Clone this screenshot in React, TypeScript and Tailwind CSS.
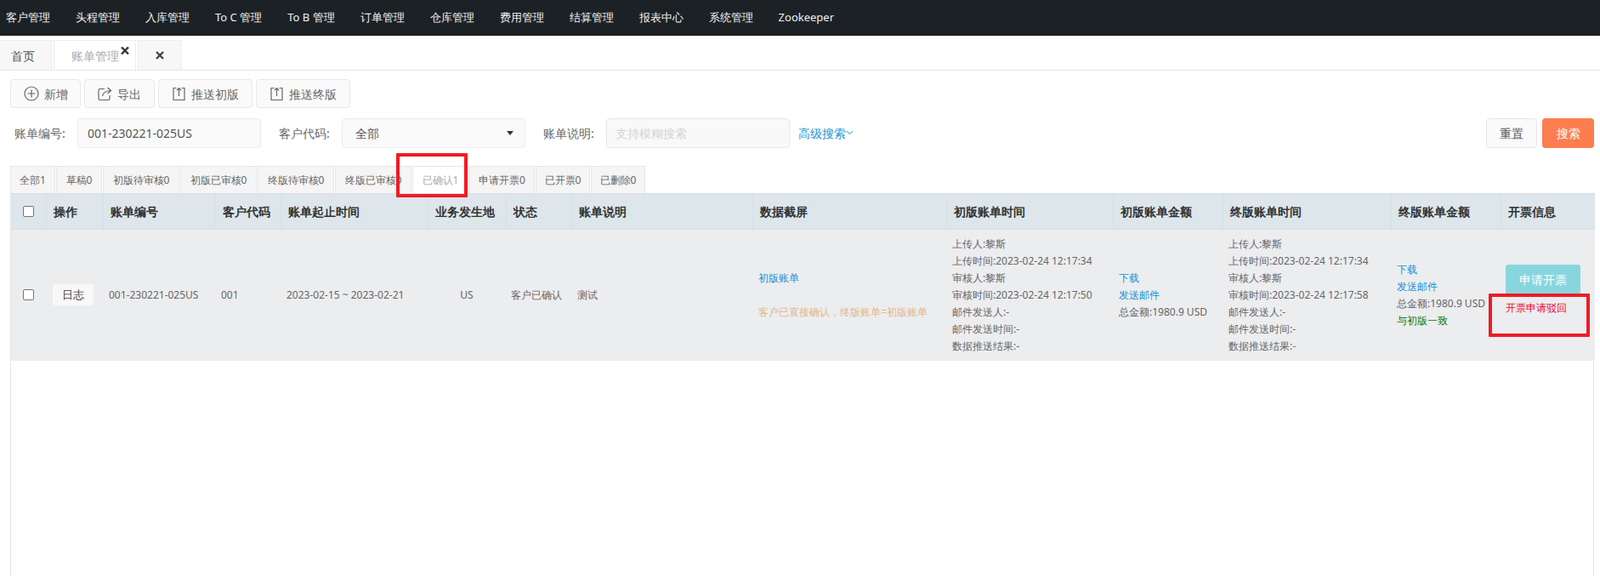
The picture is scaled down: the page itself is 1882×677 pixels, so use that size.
const NAV = ["客户管理","头程管理","入库管理","To C 管理","To B 管理","订单管理","仓库管理","费用管理","结算管理","报表中心","系统管理","Zookeeper"];
const FILTERS: [string, string][] = [["全部1","w-[53px]"],["草稿0","w-[54px]"],["初版待审核0","w-[90px]"],["初版已审核0","w-[90px]"],["终版待审核0","w-[90px]"],["终版已审核0","w-[90px]"],["已确认1","w-[66px]"],["申请开票0","w-[77px]"],["已开票0","w-[64px]"],["已删除0","w-[64px]"]];
const COLS: [string, string][] = [["","w-[41px]"],["操作","w-[67px]"],["账单编号","w-[132px]"],["客户代码","w-[77px]"],["账单起止时间","w-[173px]"],["业务发生地","w-[92px]"],["状态","w-[77px]"],["账单说明","w-[213px]"],["数据截屏","w-[228px]"],["初版账单时间","w-[196px]"],["初版账单金额","w-[129px]"],["终版账单时间","w-[198px]"],["终版账单金额","w-[129px]"],["开票信息","w-[111px]"]];

function PlusIcon() {
  return <svg width="18" height="18" viewBox="0 0 18 18" fill="none" stroke="#666" strokeWidth="1.2"><circle cx="9" cy="9" r="8"/><path d="M9 4.5v9M4.5 9h9"/></svg>;
}
function ShareIcon() {
  return <svg width="17" height="17" viewBox="0 0 17 17" fill="none" stroke="#666" strokeWidth="1.2"><path d="M8 2.5H2.5a1.5 1.5 0 0 0-1.5 1.5v10a1.5 1.5 0 0 0 1.5 1.5h10a1.5 1.5 0 0 0 1.5-1.5V10"/><path d="M5.5 11c.5-4 3-6 9.5-6.5M11.5 1l4 3.5-4 3.5"/></svg>;
}
function UploadIcon() {
  return <svg width="17" height="17" viewBox="0 0 17 17" fill="none" stroke="#666" strokeWidth="1.2"><path d="M5.5 1.5H2v14h13v-14h-3.5"/><path d="M8.5 11V1.5M6 4l2.5-2.5L11 4"/></svg>;
}
function ToolButton({ icon, label, className }: { icon: React.ReactNode; label: string; className: string }) {
  return <button className={`flex h-[34px] items-center justify-center gap-[6px] rounded-[4px] border border-[#e6e6ef] bg-[#fafafa] text-[14px] text-[#666] ${className}`}>{icon}{label}</button>;
}
function Lines({ items, className = "" }: { items: string[]; className?: string }) {
  return <div className={className}>{items.map((t) => <div key={t}>{t}</div>)}</div>;
}

export default function App() {
  return (
    <div className="relative h-[677px] overflow-hidden bg-white text-[#666] font-['Noto_Sans_CJK_SC','Microsoft_YaHei',sans-serif]">
      <nav className="flex h-[42px] items-center gap-[30px] bg-[#1c2126] pl-[7px] text-[13px] text-[#f0f0f0]">
        {NAV.map((n) => <span key={n}>{n}</span>)}
      </nav>
      <div className="flex h-[41px] items-end gap-[2px] border-b border-[#e6e6ef]">
        <div className="flex h-[35px] w-[61px] items-center border border-b-0 border-l-0 border-[#ececf2] bg-[#f7f7f7] pl-[13px] text-[14px] text-[#555]">首页</div>
        <div className="relative flex h-[35px] w-[97px] items-center border border-b-0 border-[#ececf2] bg-white pl-[20px] text-[14px] text-[#aaa]">
          账单管理
          <svg className="absolute right-[7px] top-[7px]" width="10" height="9" viewBox="0 0 10 9" stroke="#333" strokeWidth="2.4"><path d="M1 0.5l8 8M9 0.5l-8 8"/></svg>
        </div>
        <div className="flex h-[35px] w-[52px] items-center justify-center border border-b-0 border-[#ececf2] bg-[#f7f7f7]">
          <svg width="10" height="10" viewBox="0 0 10 10" stroke="#444" strokeWidth="2.4"><path d="M1 1l8 8M9 1l-8 8"/></svg>
        </div>
      </div>

      <div className="mt-[10px] flex gap-[4px] pl-[12px]">
        <ToolButton icon={<PlusIcon />} label="新增" className="w-[83px]" />
        <ToolButton icon={<ShareIcon />} label="导出" className="w-[83px]" />
        <ToolButton icon={<UploadIcon />} label="推送初版" className="w-[111px]" />
        <ToolButton icon={<UploadIcon />} label="推送终版" className="w-[111px]" />
      </div>

      <div className="mt-[11px] flex h-[36px] items-center pl-[17px] pr-[7px] text-[14px]">
        <span className="w-[74px]">账单编号:</span>
        <div className="flex h-[35px] w-[216px] items-center rounded-[4px] border border-[#ececf2] bg-[#fafafa] pl-[11px] text-[#555]">001-230221-025US</div>
        <span className="ml-[21px] w-[74px]">客户代码:</span>
        <div className="flex h-[35px] w-[216px] items-center justify-between rounded-[4px] border border-[#ececf2] bg-[#fafafa] pl-[15px] pr-[13px] text-[#555]">
          全部
          <svg width="8" height="5" viewBox="0 0 8 5" fill="#333"><path d="M0 0h8L4 5z"/></svg>
        </div>
        <span className="ml-[21px] w-[74px]">账单说明:</span>
        <div className="flex h-[35px] w-[216px] items-center rounded-[4px] border border-[#e6e6ef] bg-[#f9f9f9] pl-[10px] text-[#d4d4d4]">支持模糊搜索</div>
        <span className="ml-[10px] flex items-center text-[#1a97d0]">
          高级搜索
          <svg width="9" height="6" viewBox="0 0 9 6" fill="none" stroke="#1a97d0" strokeWidth="1"><path d="M1 1l3.5 3.5L8 1"/></svg>
        </span>
        <div className="ml-auto flex gap-[6px]">
          <button className="h-[35px] w-[60px] rounded-[4px] border border-[#e6e6ef] bg-[#fafafa] text-[#555]">重置</button>
          <button className="h-[35px] w-[61px] rounded-[4px] bg-[#fc7d50] text-white">搜索</button>
        </div>
      </div>

      <div className="mt-[21px] flex gap-px pl-[12px]">
        {FILTERS.map(([f, w]) => (
          <div key={f} className={`flex h-[32px] items-center justify-center border border-b-0 border-[#e6e6ea] text-[12px] ${w} ${f === "已确认1" ? "bg-white text-[#aaa]" : "bg-[#f5f5f5] text-[#666]"}`}>{f}</div>
        ))}
      </div>

      <div className="mx-[12px] mr-[7px] h-[450px] border-x border-[#e4e4e8]">
        <table className="w-full table-fixed border-collapse text-[12px]">
          <colgroup>{COLS.map(([h, w]) => <col key={h + w} className={w} />)}</colgroup>
          <thead>
            <tr className="h-[42px] border-y border-[#dcdce2] bg-[#dce6eb]">
              {COLS.map(([h], i) => (
                <th key={h + i} className="border-r border-[#d8e0e4] px-[8px] text-left text-[14px] font-bold text-[#333] last:border-r-0">
                  {i === 0 ? <span className="ml-[6px] block size-[13px] rounded-[2px] border border-[#767676] bg-white" /> : h}
                </th>
              ))}
            </tr>
          </thead>
          <tbody>
            <tr className="h-[154px] bg-[#ecedef] align-middle leading-[20px]">
              <td className="px-[8px]"><span className="ml-[6px] block size-[13px] rounded-[2px] border border-[#767676] bg-white" /></td>
              <td className="px-[8px]"><span className="block h-[25px] w-[48px] rounded-[3px] bg-[#f8f8f8] text-center text-[13px] leading-[25px] text-[#444]">日志</span></td>
              <td className="pl-[7px]">001-230221-025US</td>
              <td className="pl-[7px]">001</td>
              <td className="pl-[7px]">2023-02-15 ~ 2023-02-21</td>
              <td className="text-center">US</td>
              <td className="pl-[6px]">客户已确认</td>
              <td className="pl-[7px]">测试</td>
              <td className="pl-[7px]">
                <div className="text-[#1a8fdc]">初版账单</div>
                <div className="h-[20px]" />
                <div className="whitespace-nowrap text-[#e3b587]">客户已直接确认，终版账单=初版账单</div>
              </td>
              <td className="pl-[7px]"><Lines className="whitespace-nowrap" items={["上传人:黎斯","上传时间:2023-02-24 12:17:34","审核人:黎斯","审核时间:2023-02-24 12:17:50","邮件发送人:-","邮件发送时间:-","数据推送结果:-"]} /></td>
              <td className="pl-[7px]">
                <div className="text-[#1a8fdc]">下载</div>
                <div className="text-[#1a8fdc]">发送邮件</div>
                <div className="whitespace-nowrap">总金额:1980.9 USD</div>
              </td>
              <td className="pl-[7px]"><Lines className="whitespace-nowrap" items={["上传人:黎斯","上传时间:2023-02-24 12:17:34","审核人:黎斯","审核时间:2023-02-24 12:17:58","邮件发送人:-","邮件发送时间:-","数据推送结果:-"]} /></td>
              <td className="pl-[7px]">
                <div className="text-[#1a8fdc]">下载</div>
                <div className="text-[#1a8fdc]">发送邮件</div>
                <div className="whitespace-nowrap">总金额:1980.9 USD</div>
                <div className="text-[#0a7a0a]">与初版一致</div>
              </td>
              <td className="pl-[6px]">
                <button className="block h-[35px] w-[88px] rounded-[3px] bg-[#87d6de] text-[14px] text-white">申请开票</button>
                <div className="mt-[6px] whitespace-nowrap text-[#f5002d]">开票申请驳回</div>
                <div className="h-[10px]" />
              </td>
            </tr>
          </tbody>
        </table>
      </div>

      <div className="absolute left-[466px] top-[180px] h-[52px] w-[84px] rounded-[1px] border-[4px] border-[#ee1c25]" />
      <div className="absolute left-[1751px] top-[345px] h-[51px] w-[119px] rounded-[1px] border-[4px] border-[#ee1c25]" />
    </div>
  );
}
